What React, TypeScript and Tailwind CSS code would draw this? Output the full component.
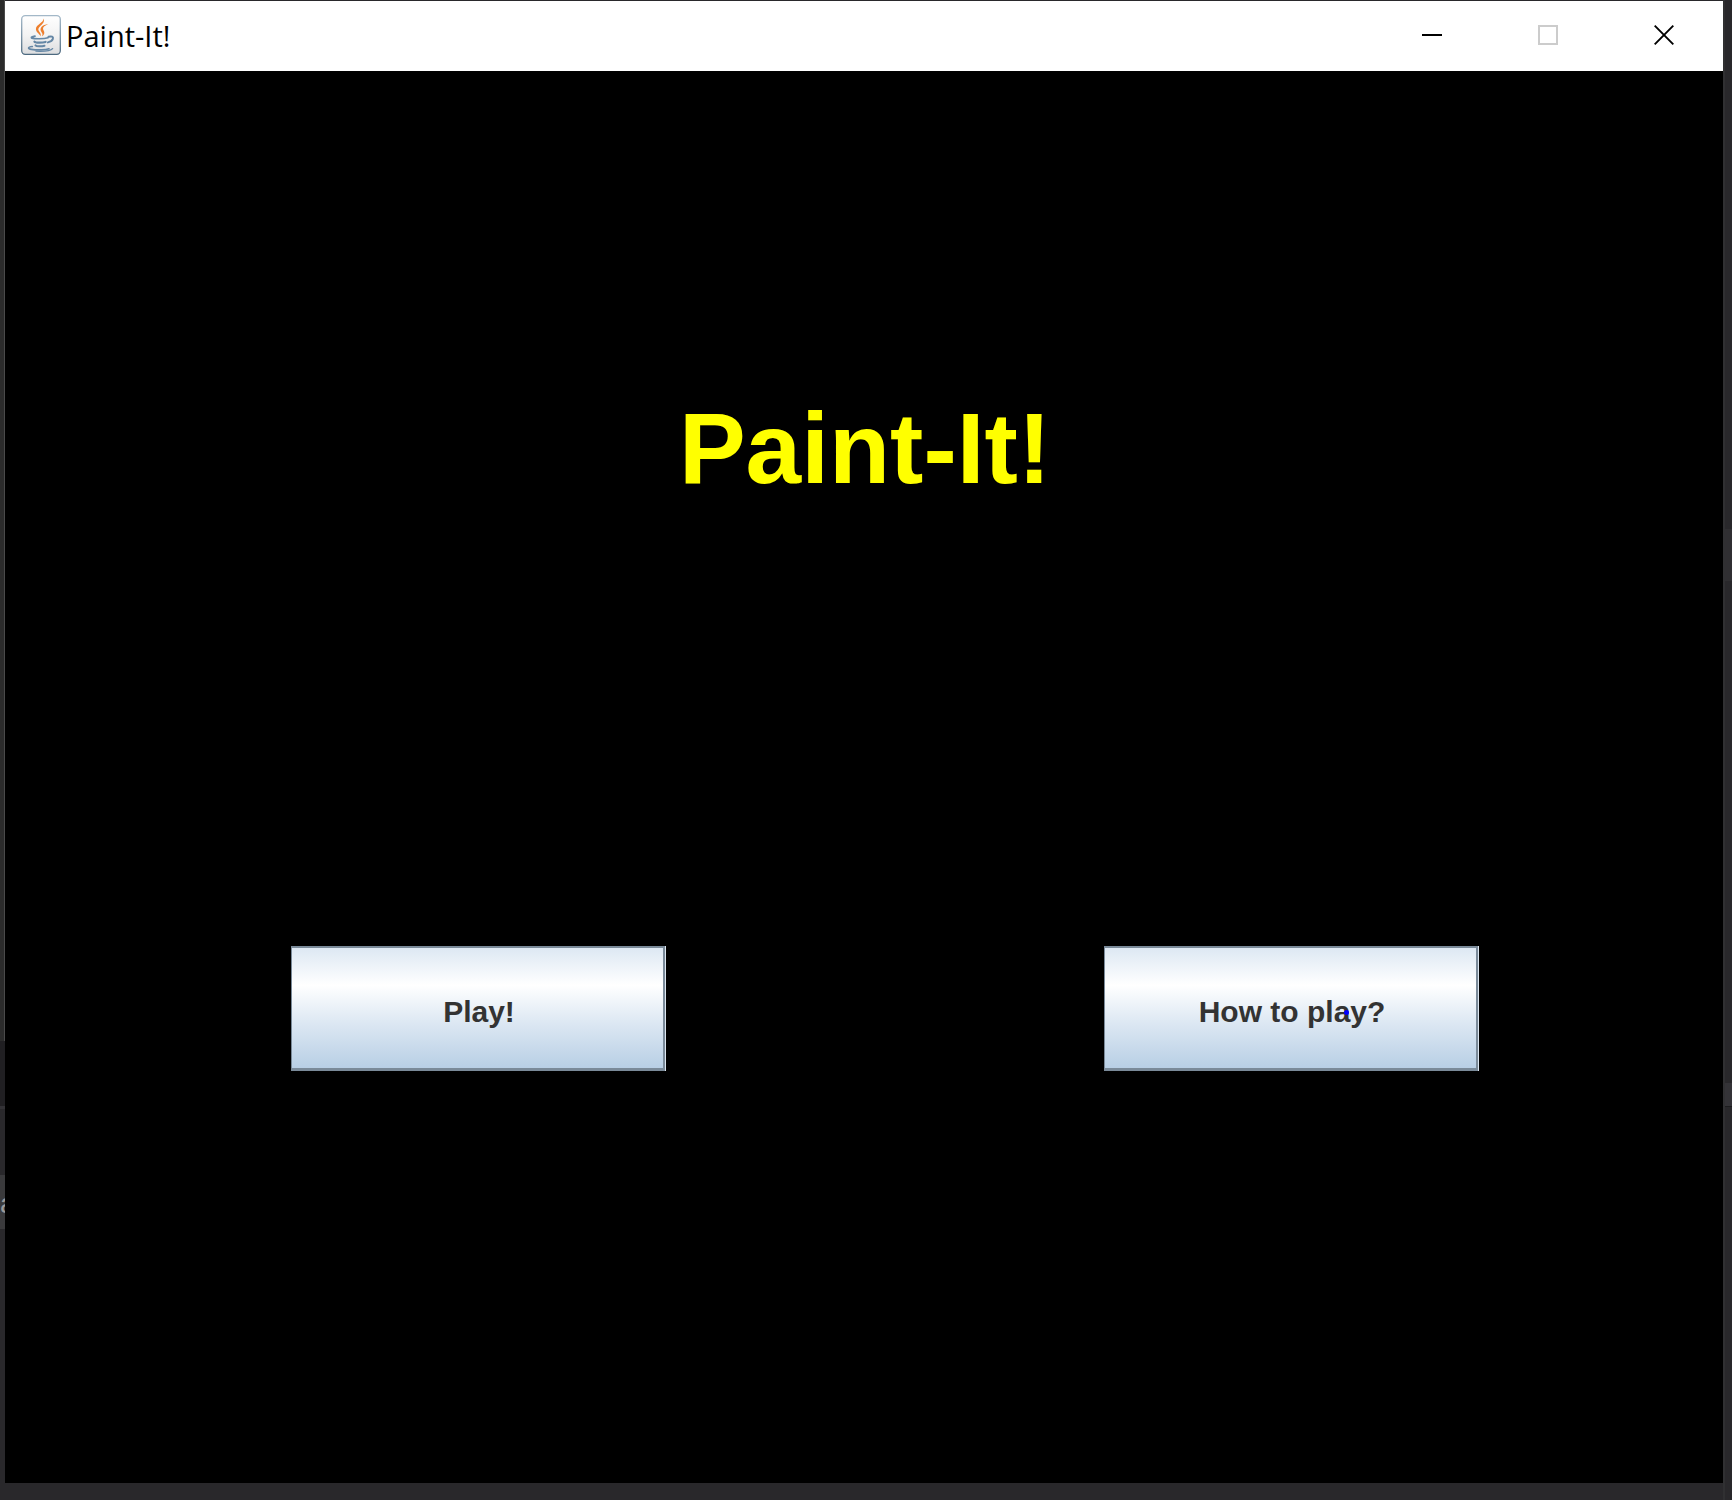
import type { ReactNode } from "react";

function JavaIcon() {
  return (
    <svg viewBox="0 0 40 40" className="h-10 w-10 shrink-0" aria-hidden="true">
      <defs>
        <linearGradient id="tile" x1="0" y1="0" x2="0" y2="1">
          <stop offset="0" stopColor="#ffffff" />
          <stop offset="0.5" stopColor="#f3f3f3" />
          <stop offset="1" stopColor="#dcdddf" />
        </linearGradient>
        <linearGradient id="rim" x1="0" y1="0" x2="0" y2="1">
          <stop offset="0" stopColor="#a3b8c8" />
          <stop offset="1" stopColor="#4d6a80" />
        </linearGradient>
      </defs>
      <rect x="0.7" y="0.7" width="38.6" height="38.6" rx="3.5" fill="url(#tile)" stroke="url(#rim)" strokeWidth="1.3" />
      <g fill="#ee7f2d">
        <path d="M22.600 3.600c1.300 3.600-1.200 5.600-3.700 7.800-2.200 2-1.900 3.400-.4 5.500 1 1.500 1.600 2.700 1.300 4.300-1.700-2.500-4.900-4.200-4.900-7.200 0-4.300 7.600-6 7.700-10.400z" />
        <path d="M27.200 9c-3.300 1.600-5.300 3-5.200 4.700.1 1.600 1.500 2.500 1.300 4.200-.1 1.300-1 2.500-2.300 3.300 1-2.100.3-3.100-.6-4.300-2.600-3.900.9-7 6.800-7.900z" />
      </g>
      <g fill="none" stroke="#6587a5" strokeLinecap="round">
        <path d="M14 21.200c-2.800.5-4.600 1.200-3 1.900 2.600 1 12 .8 16-.4" strokeWidth="1.700" />
        <path d="M27.500 21.800c3-1 5 .1 4.400 2-.5 1.800-2.500 3-5 3.600" strokeWidth="2" />
        <path d="M13.400 26.600c1 1.400 7.600 1.300 11.200.3" strokeWidth="2.100" />
        <path d="M14.500 30.300c1 1.400 6 1.300 9 .4" strokeWidth="2" />
        <path d="M11.300 31.500c-4.600.5-4.900 2.300-.9 2.900 6 .9 14.600.6 17.600-.6" strokeWidth="1.700" />
        <path d="M15 36.200c7 .3 14.800-.3 16.600-2.600" strokeWidth="1.300" />
      </g>
    </svg>
  );
}

function CaptionButton({ label, disabled, children }: { label: string; disabled?: boolean; children: ReactNode }) {
  return (
    <button type="button" aria-label={label} disabled={disabled} className="flex h-full w-[116px] items-center justify-center">
      <svg viewBox="0 0 20 20" className="h-5 w-5" fill="none" strokeWidth="2">
        {children}
      </svg>
    </button>
  );
}

function TitleBar() {
  return (
    <header className="flex h-[70px] items-center bg-white pr-px pb-0.5 pl-4">
      <JavaIcon />
      <span className="ml-1 flex-1 pt-0.5 pl-px font-['Open_Sans',sans-serif] text-[29px] leading-10 text-black">
        Paint-It!
      </span>
      <div className="flex h-full">
        <CaptionButton label="Minimize">
          <path d="M0 10h20" stroke="#000" />
        </CaptionButton>
        <CaptionButton label="Maximize" disabled>
          <path d="M1 1h18v18H1z" stroke="#ccc" />
        </CaptionButton>
        <CaptionButton label="Close">
          <path d="M0.700 0.700l18.600 18.600M19.300 0.700L0.700 19.300" stroke="#000" strokeWidth="1.900" />
        </CaptionButton>
      </div>
    </header>
  );
}

function MenuButton({ children }: { children: ReactNode }) {
  return (
    <button
      type="button"
      className="h-[125px] w-[375px] border-r border-[#dce6f0] bg-black text-[30px] leading-9 font-bold text-[#333]"
    >
      <span className="flex h-full items-center justify-center border-t-2 border-r-2 border-b-3 border-l border-[#7a8a99] bg-[linear-gradient(180deg,#dde8f3_0%,#ffffff_31%,#dde8f3_62%,#b8cfe5_100%)] pt-2 pl-[3px]">
        <span className="relative">{children}</span>
      </span>
    </button>
  );
}

export default function App() {
  return (
    <div className="flex min-h-screen overflow-hidden bg-[#29282b] font-['Liberation_Sans',Arial,sans-serif]">
      <div className="flex w-[5px] shrink-0 flex-col overflow-hidden" aria-hidden="true">
        <div className="h-[1041px] border-r border-[#4a4a4a] bg-[#2b2b2b]" />
        <div className="h-[65px] bg-[#201f22]" />
        <div className="h-[69px] border-t-3 border-[#333236] bg-[#29282b]" />
        <div className="flex h-[54px] items-center bg-[#3a3a3c] pt-1 text-[28px] text-[#999]">a</div>
      </div>
      <div className="mt-px mb-[17px] flex flex-1 flex-col">
        <TitleBar />
        <main className="flex flex-1 flex-col bg-black pt-[327px]">
          <h1 className="pl-0.5 text-center text-[100px] leading-none font-bold text-[#ff0]">Paint-It!</h1>
          <div className="mt-[448px] flex justify-between pr-[244px] pl-[286px]">
            <MenuButton>Play!</MenuButton>
            <MenuButton>
              How to play?
              <i className="absolute top-4 right-9 h-[5px] w-[5px] rounded-full bg-[#00f]" />
            </MenuButton>
          </div>
        </main>
      </div>
      <div className="flex w-[9px] shrink-0 flex-col border-l-2 border-[#303032]" aria-hidden="true">
        <div className="h-[529px]" />
        <div className="h-[52px] bg-[#302f32]" />
        <div className="h-[502px]" />
        <div className="h-[24px] border-b border-[#1c1c1e] bg-[#343337]" />
      </div>
    </div>
  );
}
